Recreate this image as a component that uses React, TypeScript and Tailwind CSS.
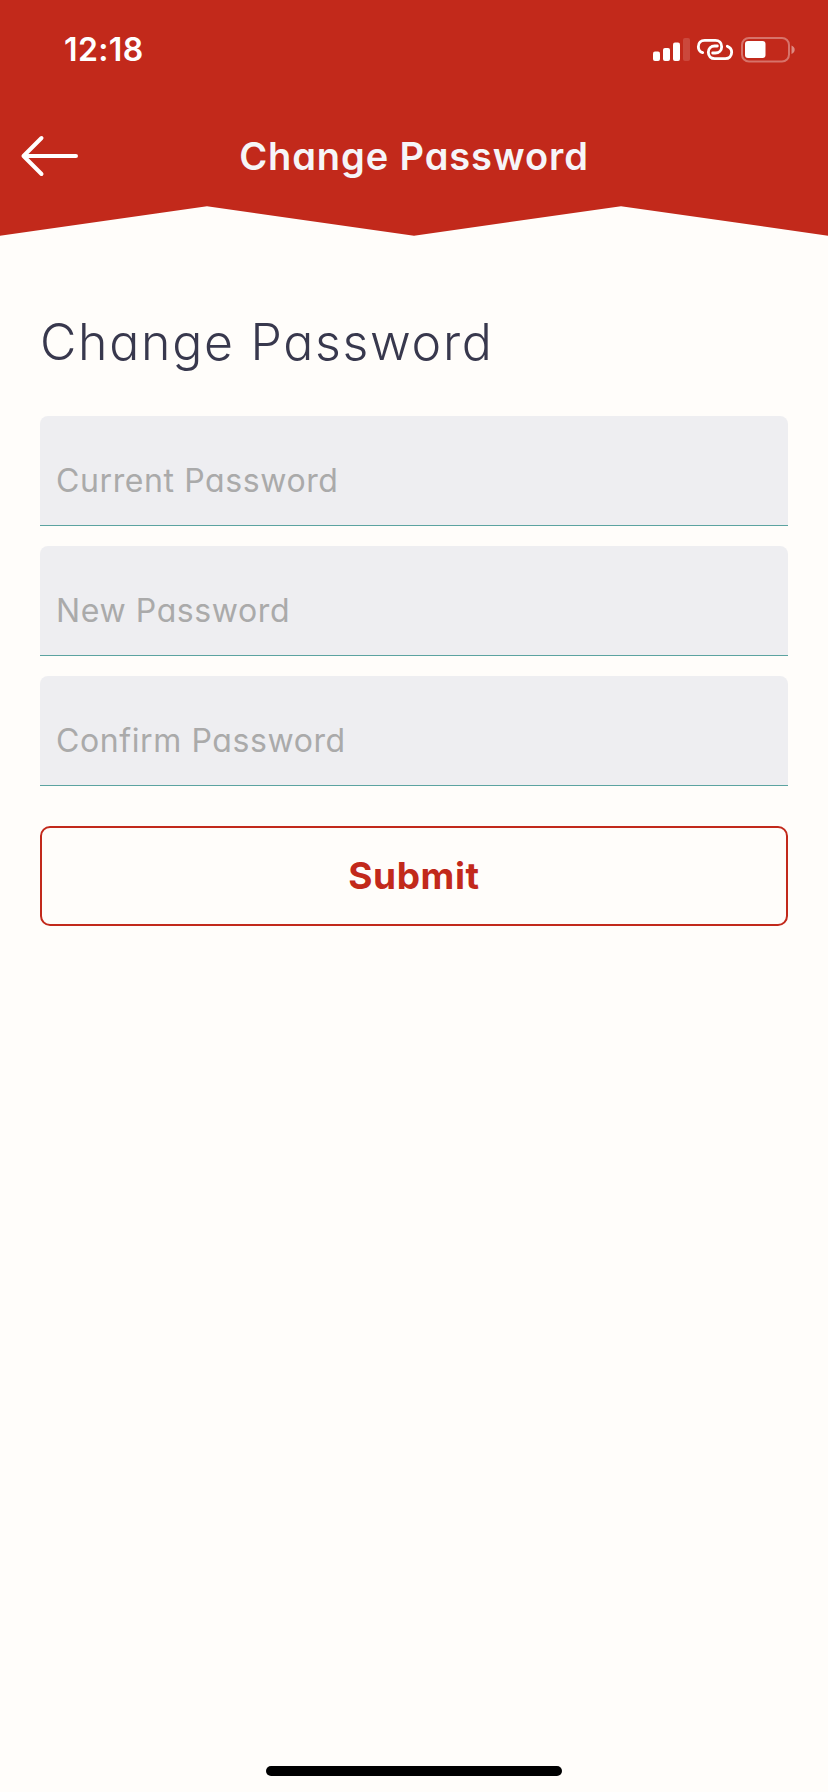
import { useState } from "react";

const fields = ["Current Password", "New Password", "Confirm Password"];

function StatusBar() {
    return (
        <div className="flex items-center justify-between h-[99px] pl-16 pr-[33px] text-white">
            <p className="text-[32px] leading-none font-semibold tracking-[0.4px]">12:18</p>
            <div className="flex items-center">
                <svg className="w-[38px] h-[25px]" viewBox="0 0 38 25" fill="currentColor">
                    <rect x="0" y="14.5" width="7" height="9.5" rx="2" />
                    <rect x="10" y="11" width="7" height="13" rx="2" />
                    <rect x="20" y="5.5" width="7" height="18.5" rx="2" />
                    <rect x="30" y="1" width="7" height="23" rx="2" opacity="0.15" />
                </svg>
                <svg className="w-[38px] h-[25px] ml-[5px]" viewBox="168 36 114 75" fill="none" stroke="currentColor" strokeWidth="8.5" strokeLinecap="round">
                    <path d="M188 83C179 80 175 73 175 65C175 54 183 46 194 46H226C237 46 245 54 245 65C245 76 237 84 226 84H218" />
                    <path d="M262 64C270 67 275 74 275 82C275 93 267 101 256 101H224C213 101 205 93 205 82C205 71 213 63 224 63H232" />
                </svg>
                <svg className="w-[54px] h-[26px] ml-[7px]" viewBox="0 0 54 26">
                    <rect x="1" y="1" width="47" height="23.5" rx="7" fill="none" stroke="currentColor" strokeWidth="2" opacity="0.35" />
                    <rect x="4" y="4" width="20.5" height="17" rx="3" fill="currentColor" />
                    <path d="M50.5 8.5c2 .8 3.200 2.300 3.200 4.200s-1.200 3.400-3.200 4.200z" fill="currentColor" opacity="0.45" />
                </svg>
            </div>
        </div>
    );
}

function Header() {
    return (
        <header>
            <div className="h-[206px] bg-[#c2291b]">
                <StatusBar />
                <div className="grid grid-cols-[100px_1fr_100px] items-center h-[113px]">
                    <button aria-label="Back" className="pl-5">
                        <svg className="w-[60px] h-[42px]" viewBox="0 0 60 42" fill="none" stroke="white" strokeWidth="4" strokeLinecap="round" strokeLinejoin="round">
                            <path d="M21.500 3L3.500 21L21.500 39M3.500 21H56" />
                        </svg>
                    </button>
                    <h1 className="text-center text-[38px] leading-none font-semibold tracking-[0.9px] whitespace-nowrap text-[#f6f5f8]">Change Password</h1>
                </div>
            </div>
            <svg className="block w-full h-[30px]" viewBox="0 0 828 30" fill="#c2291b">
                <path d="M0 0H828V29.700L621 0.300L414 29.700L207 0.300L0 29.700Z" />
            </svg>
        </header>
    );
}

export default function App() {
    const [values, setValues] = useState<Record<string, string>>({});

    return (
        <div className="flex flex-col h-[1792px] bg-[#fffdfa] font-['Inter',sans-serif] [font-feature-settings:'cv11']">
            <Header />
            <main className="flex flex-col flex-1 px-10 pt-[76px]">
                <h2 className="h-[60px] text-[50px] leading-[60px] font-light tracking-[1.7px] text-[#38384d]">Change Password</h2>
                <form className="flex flex-col gap-5 mt-11" onSubmit={(e) => e.preventDefault()}>
                    {fields.map((name) => (
                        <input
                            key={name}
                            type="text"
                            placeholder={name}
                            value={values[name] ?? ""}
                            onChange={(e) => setValues({ ...values, [name]: e.target.value })}
                            className="w-full h-[110px] px-4 pt-5 text-[32px] tracking-[0.6px] rounded-t-lg border-b border-[#5ba3a0] bg-[#eeeef1] text-[#38384d] placeholder:text-[#aaaaaa] outline-none"
                        />
                    ))}
                    <button className="h-[100px] mt-5 border-2 rounded-[10px] border-[#c2291b] text-[37px] font-bold tracking-[0.6px] text-[#c2291b]">Submit</button>
                </form>
            </main>
            <div className="self-center w-[296px] h-[10px] mb-4 bg-black rounded-full" />
        </div>
    );
}
